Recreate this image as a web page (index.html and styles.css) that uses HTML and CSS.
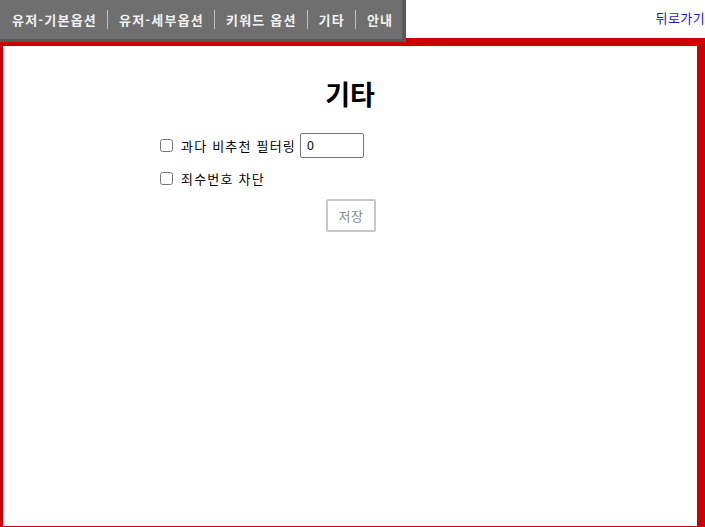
FILE: index.html
```html
<!DOCTYPE html>
<html lang="ko">
<head>
<meta charset="utf-8">
<link rel="stylesheet" href="styles.css">
</head>
<body>
<div class="topbar">
  <nav class="menu">
    <a class="menu-item">유저-기본옵션</a>
    <span class="sep"></span>
    <a class="menu-item">유저-세부옵션</a>
    <span class="sep"></span>
    <a class="menu-item">키워드 옵션</a>
    <span class="sep"></span>
    <a class="menu-item">기타</a>
    <span class="sep"></span>
    <a class="menu-item">안내</a>
  </nav>
  <a class="back">뒤로가기</a>
</div>
<main class="frame">
  <h1 class="title">기타</h1>
  <form class="form">
    <div class="row">
      <input type="checkbox" class="chk">
      <span class="label">과다 비추천 필터링</span>
      <input type="text" class="num" value="0">
    </div>
    <div class="row row2">
      <input type="checkbox" class="chk">
      <span class="label">죄수번호 차단</span>
    </div>
    <div class="actions">
      <button type="button" class="save">저장</button>
    </div>
  </form>
</main>
</body>
</html>
```
FILE: styles.css
```css
html, body {
  margin: 0;
  padding: 0;
  overflow: hidden;
  background: #fff;
  font-family: "Noto Sans CJK KR", "Noto Sans", sans-serif;
}
body {
  width: 705px;
  height: 527px;
  position: relative;
}
.topbar {
  display: flex;
  justify-content: space-between;
  align-items: flex-start;
  height: 38px;
  position: relative;
  z-index: 2;
}
.menu {
  display: flex;
  align-items: center;
  height: 39px;
  padding: 0 9px 0 12px;
  background: #6f6f6f;
  border-right: 4px solid #595959;
  border-bottom: 3px solid #595959;
  box-sizing: content-box;
}
.menu-item {
  color: #f2f2f2;
  font-size: 13px;
  font-weight: 700;
  line-height: 18px;
  letter-spacing: 1.2px;
  white-space: nowrap;
}
.sep {
  width: 1px;
  height: 19px;
  background: #bdbdbd;
  margin: 0 11px 0 10px;
}
.back {
  color: #1a1acc;
  font-size: 13px;
  line-height: 18px;
  letter-spacing: 0.4px;
  margin-top: 9px;
  white-space: nowrap;
}
.frame {
  margin-left: -5px;
  width: 694px;
  height: 480px;
  border: 8px solid #cc0000;
  background: #fff;
  display: block;
}
.title {
  margin: 28px 0 0 0;
  text-align: center;
  font-size: 27px;
  font-weight: 700;
  line-height: 40px;
  color: #000;
}
.form {
  margin: 18px 0 0 157px;
  width: 230px;
}
.row {
  display: flex;
  align-items: center;
  height: 27px;
}
.row2 {
  margin-top: 6px;
}
.chk {
  width: 13px;
  height: 13px;
  margin: 0 8px 0 0;
}
.label {
  font-size: 13px;
  color: #000;
  letter-spacing: 1.2px;
  white-space: nowrap;
}
.num {
  margin-left: 4px;
  width: 64px;
  height: 25px;
  box-sizing: border-box;
  border: 1px solid #767676;
  border-radius: 2px;
  padding: 1px 6px;
  font-size: 12px;
  font-family: "Noto Sans", sans-serif;
}
.actions {
  display: flex;
  justify-content: flex-end;
  margin-top: 7px;
  width: 216px;
}
.save {
  width: 50px;
  height: 33px;
  box-sizing: border-box;
  border: 2px solid #c8c8c8;
  border-radius: 2px;
  background: #fff;
  color: #8a8a8a;
  font-size: 13px;
  letter-spacing: 0.5px;
  font-family: "Noto Sans CJK KR", sans-serif;
  padding: 0;
}
```
